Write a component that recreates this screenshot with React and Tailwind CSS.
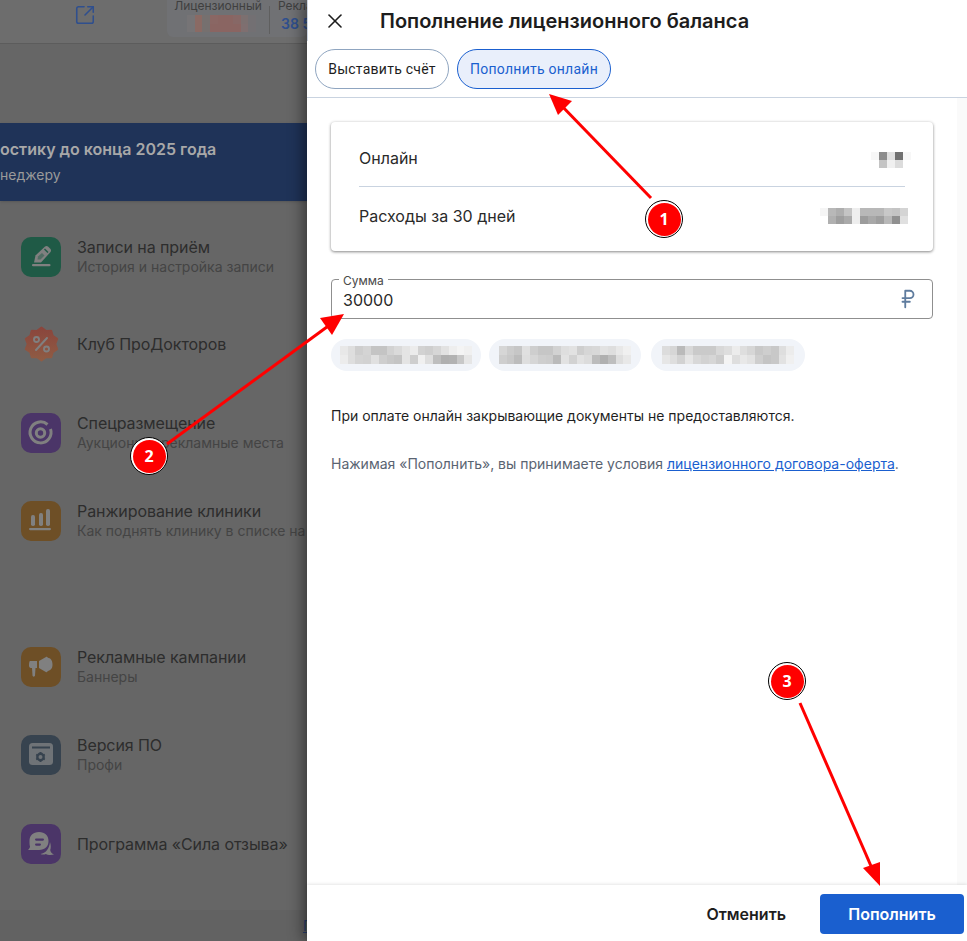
import React from 'react';
import { SquareArrowOutUpRight, X, RussianRuble } from 'lucide-react';

const g = (v) => `rgb(${v},${v},${v})`;
const ICON = '#808080';

function Pixels({ rows, cell = 8, h = 8, tint }) {
  return (
    <div className="flex flex-col">
      {rows.map((row, i) => (
        <div key={i} className="flex">
          {row.map((c, j) => (
            <div key={j} style={{ width: cell, height: h, background: tint ? c : g(c) }} />
          ))}
        </div>
      ))}
    </div>
  );
}

const Tile = ({ className, children }) => (
  <div className={`w-10 h-10 rounded-[10px] flex items-center justify-center shrink-0 ${className}`}>
    <svg width="40" height="40" viewBox="0 0 40 40">{children}</svg>
  </div>
);

const PenIcon = () => (
  <>
    <path d="M13 25.500L14.500 18.500L24 9.500Q25.500 8.500 27 9.500L29.500 12Q30.500 13.500 29.500 15L20 25.500z" fill={ICON} />
    <path d="M23.500 12L27 15.500" stroke="#1f5a46" strokeWidth="1.500" />
    <path d="M16.500 22.500L17 19.500L21 16L23.500 18.500L19.500 22.500z" fill="#1f5a46" opacity="0.5" />
    <rect x="11" y="27" width="18.500" height="2.300" rx="1.100" fill={ICON} />
  </>
);
const TargetIcon = () => (
  <>
    <path d="M26.500 11.500A10.500 10.500 0 1 0 29.500 16" fill="none" stroke={ICON} strokeWidth="3" />
    <circle cx="19.500" cy="20" r="4.200" fill="none" stroke={ICON} strokeWidth="3" />
  </>
);
const BarsIcon = () => (
  <g fill={ICON}>
    <rect x="10" y="14" width="4" height="11" rx="1.800" />
    <rect x="18" y="12" width="4" height="13" rx="1.800" />
    <rect x="25" y="8" width="4" height="17" rx="1.800" />
    <rect x="8" y="27" width="22" height="2.200" rx="1.100" />
  </g>
);
const HornIcon = () => (
  <g fill={ICON}>
    <path d="M9 14h7v7h-1.500l-.5 7.500c-.2 1.500-2.300 1.500-2.500 0L11 21c-2 0-3-.5-3-2.500 0-2.500.5-4.500 1-4.500z" />
    <path d="M18 14L25 10c.8-.6 1.500 0 1.800.8 2.500.2 4.700 2.400 4.700 6.700 0 4-2 6-4.700 6.500-.3 1-1.200 1.500-2 1L18 21z" />
  </g>
);
const WindowIcon = () => (
  <>
    <rect x="8" y="8" width="24" height="22" rx="3.500" fill="#6f7377" />
    <rect x="11" y="11.500" width="18" height="2" fill="#37434f" />
    <circle cx="19.500" cy="22" r="3.200" fill="none" stroke="#37434f" strokeWidth="2.400" />
    <path d="M19.500 17v1.500M19.500 25.500V27M15.200 19.500l1.300.7M22.500 23.800l1.300.7M15.200 24.500l1.300-.7M22.500 20.200l1.300-.7" stroke="#37434f" strokeWidth="1.800" />
  </>
);
const ChatIcon = () => (
  <>
    <path d="M18 8c6 0 9.500 3.500 9.500 9s-3.500 9-9.500 9H7c1.500-1.500 2-2.500 2-3.500C8.500 21 8.500 19 8.500 17c0-5.500 3.500-9 9.500-9z" fill={ICON} />
    <path d="M29 18c1 3.500 1 6 .2 8 .3 2 1.800 3.500 3.800 4.500-3 .8-6.500.5-8-.5-2 .8-3.800.8-5.500 0 5-.5 9-5.500 9.500-12z" fill={ICON} />
    <rect x="14" y="14.500" width="9" height="2.200" rx="1.100" fill="#4b3568" />
    <rect x="14" y="19.500" width="6" height="2.200" rx="1.100" fill="#4b3568" />
  </>
);

const clubPoints = Array.from({ length: 20 }, (_, i) => {
  const a = (i * Math.PI) / 10 - Math.PI / 2;
  const r = i % 2 === 0 ? 16.500 : 13.800;
  return `${(20.500 + r * Math.cos(a)).toFixed(1)},${(20 + r * Math.sin(a)).toFixed(1)}`;
}).join(' ');

const ClubIcon = () => (
  <>
    <defs>
      <linearGradient id="club" x1="0" y1="0" x2="0" y2="1">
        <stop offset="0" stopColor="#8a453c" />
        <stop offset="1" stopColor="#8f5c44" />
      </linearGradient>
    </defs>
    <polygon points={clubPoints} fill="url(#club)" stroke="url(#club)" strokeWidth="2" strokeLinejoin="round" />
    <circle cx="15.500" cy="15.500" r="2.500" fill="none" stroke={ICON} strokeWidth="1.900" />
    <circle cx="25.500" cy="25" r="2.500" fill="none" stroke={ICON} strokeWidth="1.900" />
    <path d="M26 14L15 26" stroke={ICON} strokeWidth="2" strokeLinecap="round" />
  </>
);

function NavItem({ icon, title, sub, className = '' }) {
  return (
    <div className={`flex items-center h-10 pl-[21px] gap-4 whitespace-nowrap ${className}`}>
      {icon}
      <div>
        <div className="text-[16px] leading-5 tracking-[-0.08px] text-[#2d2d2d]">{title}</div>
        {sub && <div className="text-[14px] leading-5 text-[#444444]">{sub}</div>}
      </div>
    </div>
  );
}

const Badge = ({ n, className }) => (
  <div
    className={`absolute w-[38px] h-[38px] rounded-full bg-white border border-black flex items-center justify-center ${className}`}
  >
    <div className="w-[33px] h-[33px] rounded-full bg-[#ff0000] text-white font-bold text-[16px] flex items-center justify-center font-['Open_Sans',sans-serif]">
      {n}
    </div>
  </div>
);

const chip1 = [
  [232, 222, 206, 212, 196, 196, 210, 218, 228, 236, 210, 206, 214, 226, 238, 244, 240],
  [236, 222, 212, 210, 224, 206, 200, 196, 228, 206, 240, 222, 190, 176, 178, 200, 230],
];
const chip2 = [
  [214, 204, 198, 224, 206, 198, 198, 210, 222, 226, 206, 214, 216, 226, 222, 232, 240],
  [206, 200, 188, 222, 214, 206, 204, 186, 226, 210, 226, 220, 188, 176, 190, 222, 232],
];
const chip3 = [
  [220, 214, 186, 216, 202, 202, 202, 216, 222, 236, 222, 214, 200, 206, 200, 222, 236],
  [230, 222, 210, 230, 216, 210, 214, 204, 244, 222, 232, 226, 206, 196, 200, 226, 240],
];

export default function App() {
  return (
    <div className="relative w-[967px] h-[941px] overflow-hidden bg-[#666666] font-['Inter',sans-serif]">
      {/* Page behind the drawer */}
      <header className="h-[44px] bg-[#6d6d6d] border-b border-[#5c5c5c] flex">
        <div className="w-[167px] shrink-0 flex justify-center pl-[2px] pt-[4px]">
          <SquareArrowOutUpRight size={22} strokeWidth={1.7} className="text-[#2f4f8e]" />
        </div>
        <div className="flex w-[140px] shrink-0 h-[37px] bg-[#707174] rounded-b-md overflow-hidden whitespace-nowrap">
          <div className="w-[102px] shrink-0 flex flex-col items-center">
            <div className="text-[12px] leading-[12px] text-[#3f3f3f]">Лицензионный</div>
            <div className="mt-[3px] pl-[7px]">
              <Pixels
                tint
                cell={7.700}
                h={8.500}
                rows={[
                  ['#767476', '#8a6a64', '#76706f', '#8a6764', '#8a6562', '#8a6562', '#876866', '#7c7070', '#737073'],
                  ['#767476', '#8a6a64', '#76706f', '#8a6562', '#8a6562', '#8a6562', '#8a6562', '#7f6f70', '#737073'],
                ]}
              />
            </div>
          </div>
          <div className="w-px h-[28px] mt-[6px] shrink-0 bg-[#5f5f5f]" />
          <div className="pl-2 shrink-0">
            <div className="text-[12px] leading-[12px] text-[#3f3f3f]">Реклама</div>
            <div className="text-[14px] leading-5 font-semibold text-[#2f4f8e] pl-[3px] mt-[2px]">38 500</div>
          </div>
        </div>
      </header>

      <div className="mt-[79px] h-[78px] bg-[#1f3358] shadow-sm overflow-hidden whitespace-nowrap">
        <div className="text-[16px] leading-6 font-semibold text-[#a8a8a8] mt-[14px]">остику до конца 2025 года</div>
        <div className="text-[14px] leading-5 text-[#9a9a9a] mt-[4px]">неджеру</div>
      </div>

      <NavItem
        className="mt-[36px]"
        icon={<Tile className="bg-[#1f5a46]"><PenIcon /></Tile>}
        title="Записи на приём"
        sub="История и настройка записи"
      />
      <NavItem
        className="mt-[47px]"
        icon={<Tile><ClubIcon /></Tile>}
        title="Клуб ПроДокторов"
      />
      <NavItem
        className="mt-[49px]"
        icon={<Tile className="bg-[#4b3568]"><TargetIcon /></Tile>}
        title="Спецразмещение"
        sub="Аукционы и рекламные места"
      />
      <NavItem
        className="mt-[48px]"
        icon={<Tile className="bg-[#6e4f26]"><BarsIcon /></Tile>}
        title="Ранжирование клиники"
        sub="Как поднять клинику в списке на сайте"
      />
      <NavItem
        className="mt-[106px]"
        icon={<Tile className="bg-[#6e4f26]"><HornIcon /></Tile>}
        title="Рекламные кампании"
        sub="Баннеры"
      />
      <NavItem
        className="mt-[48px]"
        icon={<Tile className="bg-[#37434f]"><WindowIcon /></Tile>}
        title="Версия ПО"
        sub="Профи"
      />
      <NavItem
        className="mt-[49px]"
        icon={<Tile className="bg-[#4b3568]"><ChatIcon /></Tile>}
        title="Программа «Сила отзыва»"
      />
      <div className="absolute left-0 right-0 bottom-0 h-[31px] bg-[#626262] pl-[303px] pt-[6px] text-[14px] leading-5 underline text-[#2a3f6e]">
        Политика
      </div>

      {/* Drawer */}
      <aside className="absolute top-0 right-0 bottom-0 w-[660px] bg-white flex flex-col shadow-[-4px_0_14px_rgba(0,0,0,0.45)]">
        <div className="h-[41px] flex items-center pl-[15px] border-l border-[#cdd5e2]">
          <X size={24} strokeWidth={1.6} className="text-[#1d1d1d]" />
          <h1 className="ml-[33px] text-[20px] font-semibold text-[#1d1d1d] whitespace-nowrap">
            Пополнение лицензионного баланса
          </h1>
        </div>
        <div className="h-[57px] pt-2 pl-2 flex gap-2 border-b border-[#c9d3e0] font-['Roboto',sans-serif] text-[14px] tracking-[0.25px]">
          <button className="w-[134px] h-10 rounded-full border border-[#8fa5c0] text-[#1d1d1d]">Выставить счёт</button>
          <button className="w-[154px] h-10 rounded-full border border-[#1a5fcf] bg-[#e9effb] text-[#1a5fcf]">Пополнить онлайн</button>
        </div>

        <div className="flex-1 flex">
          <div className="w-[650px] pl-6 pt-6 pr-6">
            <div className="w-[602px] h-[129px] rounded-[4px] bg-white shadow-[0_1px_3px_rgba(0,0,0,0.45),0_0_4px_rgba(0,0,0,0.06)] px-7 text-[16px] text-[#2a2a2a]">
              <div className="h-[65px] flex items-center justify-between border-b border-[#c9d3e0] w-[546px]">
                <span className="mt-[8px]">Онлайн</span>
                <div className="mr-[-6px] mt-[12px]">
                  <Pixels rows={[[247, 140, 224, 112, 247], [255, 196, 240, 220, 255]]} />
                </div>
              </div>
              <div className="h-[57px] flex items-center justify-between w-[549px]">
                <span>Расходы за 30 дней</span>
                <Pixels
                  rows={[
                    [245, 184, 174, 196, 238, 184, 184, 184, 200, 196, 212],
                    [255, 176, 158, 170, 238, 156, 168, 158, 184, 144, 224],
                  ]}
                />
              </div>
            </div>

            <div className="relative mt-[28px] w-[602px] h-10 rounded-[4px] border border-[#8f8f8f] flex items-center justify-between pl-[11px] pr-[13px]">
              <span className="absolute left-[7px] top-[-5px] bg-white px-[4px] text-[12px] leading-[12px] text-[#4a4a4a]">Сумма</span>
              <span className="text-[16px] leading-5 pt-[2px] text-[#2a2a2a]">30000</span>
              <RussianRuble size={22} strokeWidth={2} className="text-[#5f7c9e]" />
            </div>

            <div className="flex mt-5">
              <div className="w-[150px] h-8 rounded-full bg-[#f1f4f9] flex items-center justify-center"><Pixels cell={7.800} h={9} rows={chip1} /></div>
              <div className="w-[152px] h-8 rounded-full bg-[#f1f4f9] flex items-center justify-center ml-2"><Pixels cell={7.800} h={9} rows={chip2} /></div>
              <div className="w-[154px] h-8 rounded-full bg-[#f1f4f9] flex items-center justify-center ml-[10px]"><Pixels cell={7.800} h={9} rows={chip3} /></div>
            </div>

            <p className="mt-[35px] text-[14px] leading-5 text-[#1f1f1f]">
              При оплате онлайн закрывающие документы не предоставляются.
            </p>
            <p className="mt-7 text-[14px] leading-5 text-[#5a6472]">
              Нажимая «Пополнить», вы принимаете условия{' '}
              <a className="text-[#1a5fcf] underline">лицензионного договора-оферта</a>.
            </p>
          </div>
          <div className="w-[10px] bg-[#fafafa]" />
        </div>

        <footer className="h-[56px] bg-white shadow-[0_-1px_3px_rgba(0,0,0,0.1)] flex items-center justify-end pr-[3px] pt-[2px] z-10">
          <button className="mr-[34px] text-[16px] font-semibold text-[#1d1d1d]">Отменить</button>
          <button className="w-[144px] h-10 rounded-[4px] bg-[#1a5fcf] text-white text-[16px] font-semibold">Пополнить</button>
        </footer>
      </aside>

      {/* Annotation arrows */}
      <svg className="absolute inset-0 z-20 pointer-events-none" width="967" height="941" fill="#ff0000">
        <path d="M651 198L558 102" stroke="#ff0000" strokeWidth="3" />
        <path d="M549 94L572 101L558 115z" />
        <path d="M167 444L331 324" stroke="#ff0000" strokeWidth="3" />
        <path d="M344 314L332 335L320 318z" />
        <path d="M800 703L871 866" stroke="#ff0000" strokeWidth="3" />
        <path d="M880 886L863 868L880 862z" />
      </svg>
      <Badge n="1" className="z-30 left-[645px] top-[200px]" />
      <Badge n="2" className="z-30 left-[130px] top-[437px]" />
      <Badge n="3" className="z-30 left-[768px] top-[662px]" />
    </div>
  );
}
